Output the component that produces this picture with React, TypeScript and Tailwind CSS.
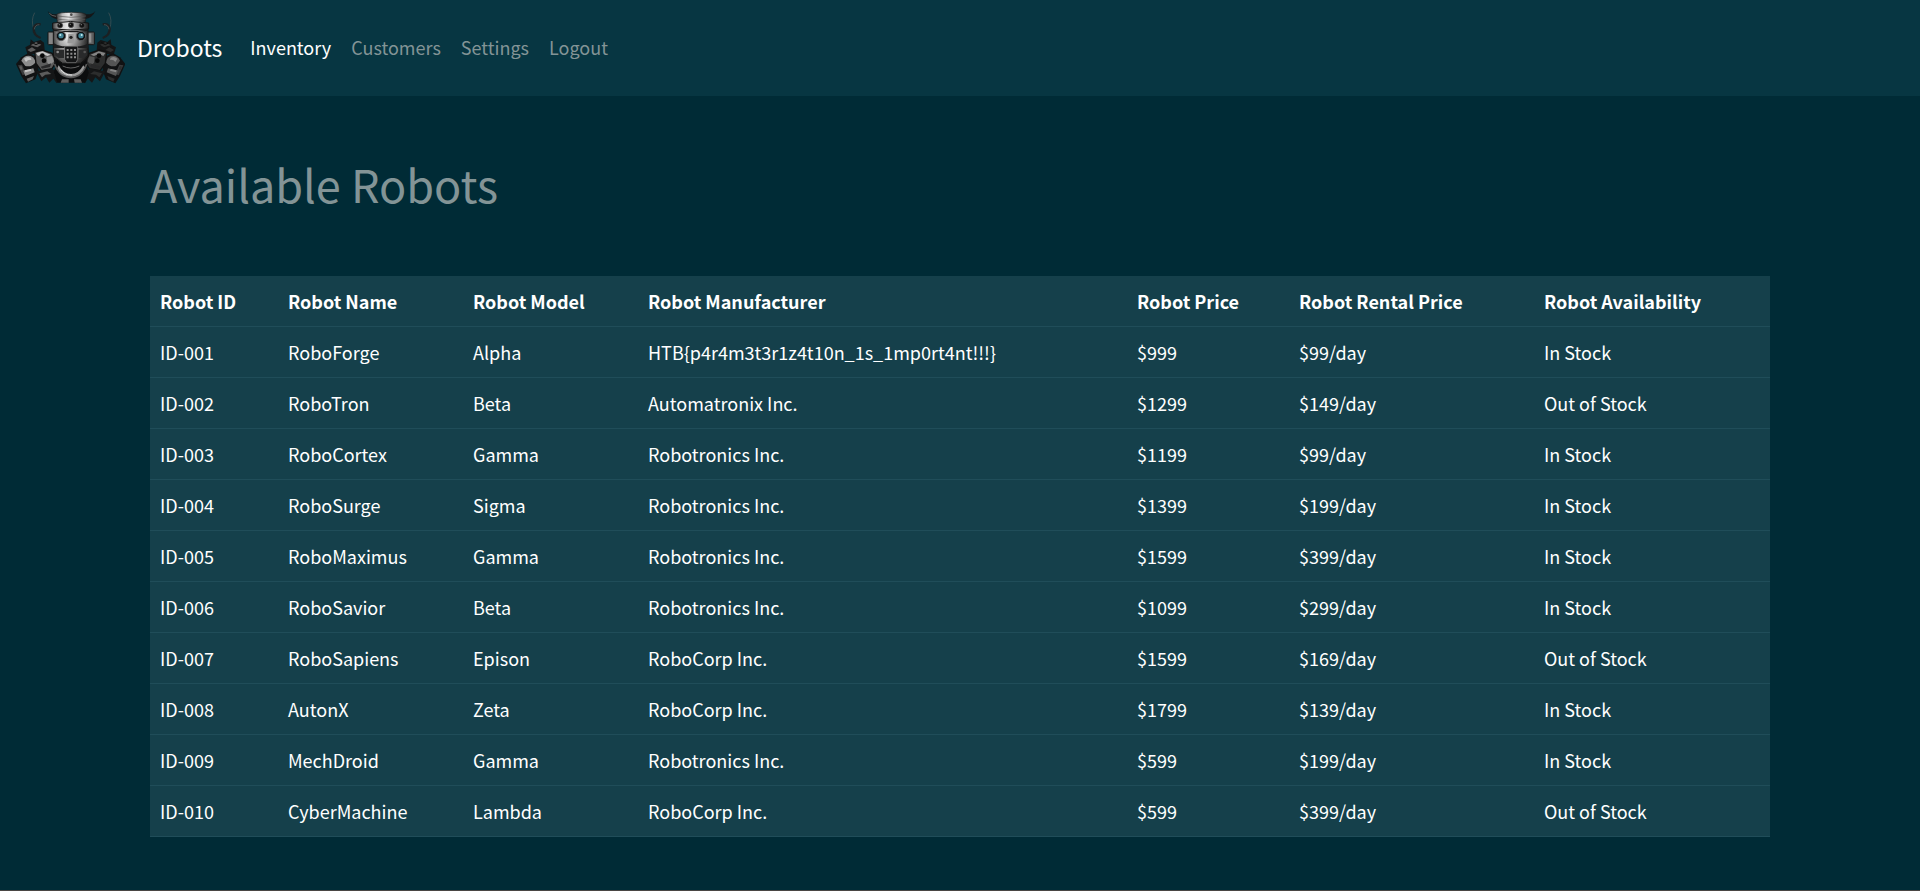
const columns = [
  { label: "Robot ID", width: "w-[128px]" },
  { label: "Robot Name", width: "w-[185px]" },
  { label: "Robot Model", width: "w-[175px]" },
  { label: "Robot Manufacturer", width: "" },
  { label: "Robot Price", width: "w-[162px]" },
  { label: "Robot Rental Price", width: "w-[245px]" },
  { label: "Robot Availability", width: "w-[236px]" },
];

const robots = [
  ["ID-001", "RoboForge", "Alpha", "HTB{p4r4m3t3r1z4t10n_1s_1mp0rt4nt!!!}", "$999", "$99/day", "In Stock"],
  ["ID-002", "RoboTron", "Beta", "Automatronix Inc.", "$1299", "$149/day", "Out of Stock"],
  ["ID-003", "RoboCortex", "Gamma", "Robotronics Inc.", "$1199", "$99/day", "In Stock"],
  ["ID-004", "RoboSurge", "Sigma", "Robotronics Inc.", "$1399", "$199/day", "In Stock"],
  ["ID-005", "RoboMaximus", "Gamma", "Robotronics Inc.", "$1599", "$399/day", "In Stock"],
  ["ID-006", "RoboSavior", "Beta", "Robotronics Inc.", "$1099", "$299/day", "In Stock"],
  ["ID-007", "RoboSapiens", "Epison", "RoboCorp Inc.", "$1599", "$169/day", "Out of Stock"],
  ["ID-008", "AutonX", "Zeta", "RoboCorp Inc.", "$1799", "$139/day", "In Stock"],
  ["ID-009", "MechDroid", "Gamma", "Robotronics Inc.", "$599", "$199/day", "In Stock"],
  ["ID-010", "CyberMachine", "Lambda", "RoboCorp Inc.", "$599", "$399/day", "Out of Stock"],
];

const links = ["Inventory", "Customers", "Settings", "Logout"];

function Antenna() {
  return (
    <g fill="none">
      <path d="M104 38Q92 60 101 86" stroke="#4a5658" strokeWidth="2" />
      <path d="M122 73Q104 70 101 86Q100 106 122 114" stroke="#1c2022" strokeWidth="7" />
      <path d="M118 74Q105 74 103 88" stroke="#5c6264" strokeWidth="2" />
    </g>
  );
}

function Arm({ plate, light, mid }: { plate: string; light: string; mid: string }) {
  return (
    <g>
      <path d="M92 118L102 126L122 120L132 128L134 150L112 158L84 168L76 142L90 134Z" fill="#141516" />
      <path d="M92 136L108 126L124 134L112 142ZM82 150L96 142L108 150L92 156Z" fill={mid} />
      <path d="M100 130L108 134L120 128" fill="none" stroke="#0c0c0c" strokeWidth="3" />
      <path d="M48 192L64 172L84 160L112 170L116 212L106 238L78 250L64 228Z" fill="#111213" />
      <path d="M64 182Q72 164 92 168Q106 174 106 188Q94 202 76 198Z" fill={plate} />
      <path d="M72 176Q80 168 92 173L94 180Q84 178 78 186Z" fill={light} />
      <path d="M54 196L66 194L78 222L68 226Z" fill="#3a3b3c" />
      <path d="M58 200L64 198L68 208L62 210Z" fill={mid} />
      <path d="M70 212L100 205L104 217L76 228Z" fill={plate} />
      <path d="M74 211L92 207L94 212L76 217Z" fill={light} />
      <path d="M80 236L102 228L98 238L84 245Z" fill={mid} />
      <path d="M104 156L126 150L156 160L170 184L156 206L124 212L108 190Z" fill={mid} stroke="#101010" strokeWidth="4" />
      <path d="M108 159L128 154L152 164L142 168L128 162L114 168Z" fill={light} />
      <path d="M140 172L156 168L162 184L150 196L142 188Z" fill={plate} />
      <path d="M122 200L154 190L150 201L126 206Z" fill="#29292a" />
      <circle cx="127" cy="167" r="7" fill="#080808" />
      <circle cx="132" cy="182" r="7" fill="#080808" />
      <path d="M108 214L154 206L196 222L210 246L196 242L188 250L178 240L170 250L160 236L148 248L138 232L124 244Z" fill="#151617" />
      <path d="M118 220L142 214L154 222L136 224L126 232ZM164 222L180 228L186 238L170 234Z" fill={mid} />
      <path d="M160 162L186 154L192 198L214 220V240L180 226L164 200Z" fill="#101112" />
    </g>
  );
}

function RobotLogo() {
  return (
    <svg className="h-20 w-[110px] shrink-0" viewBox="45 24 330 240" role="img" aria-label="Robot">
      <defs>
        <linearGradient id="steel" x1="0" x2="1" y1="0" y2="0">
          <stop offset="0" stopColor="#3c3c3c" />
          <stop offset="0.2" stopColor="#bdbdbd" />
          <stop offset="0.4" stopColor="#e6e6e6" />
          <stop offset="0.65" stopColor="#999" />
          <stop offset="1" stopColor="#1d1e1e" />
        </linearGradient>
        <linearGradient id="jaw" x1="0" x2="0" y1="0" y2="1">
          <stop offset="0.3" stopColor="#000" stopOpacity="0" />
          <stop offset="1" stopColor="#000" stopOpacity="0.65" />
        </linearGradient>
      </defs>
      <Antenna />
      <g transform="translate(430 0) scale(-1 1)">
        <Antenna />
      </g>
      <Arm plate="#8c8c8c" light="#c6c6c6" mid="#5c5c5c" />
      <g transform="translate(424 0) scale(-1 1)">
        <Arm plate="#555" light="#858585" mid="#2c2d2d" />
      </g>
      <path d="M170 180H258L266 218L256 248H172L162 218Z" fill="#0c0d0e" />
      <path d="M164 192Q178 232 213 232Q246 232 260 192" fill="none" stroke="#565656" strokeWidth="5" />
      <path d="M176 196Q190 222 213 222Q236 222 250 196L254 202Q242 230 213 230Q182 230 172 204Z" fill="#999" />
      <path d="M182 209Q194 226 216 225" fill="none" stroke="#e0e0e0" strokeWidth="3" />
      <path d="M188 198Q212 210 238 198" fill="none" stroke="#666" strokeWidth="3" />
      <path d="M186 238H206V248H182ZM222 238H242L246 248H224Z" fill="#5d5d5d" />
      <path d="M143 33Q151 44 170 43L172 58Q150 54 143 33ZM286 33Q278 44 258 43L254 58Q278 54 286 33Z" fill="#151617" />
      <path d="M148 40Q155 48 168 49" fill="none" stroke="#858585" strokeWidth="2" />
      <rect x="144" y="96" width="20" height="38" rx="2" fill="#858585" stroke="#151515" strokeWidth="3" />
      <rect x="262" y="96" width="21" height="38" rx="2" fill="#5d5f60" stroke="#151515" strokeWidth="3" />
      <rect x="266" y="100" width="8" height="28" fill="#909090" />
      <path d="M160 84H264V136L266 170L242 190H188L160 170V136Z" fill="url(#steel)" stroke="#161616" strokeWidth="3" />
      <path d="M160 84H264V136L266 170L242 190H188L160 170V136Z" fill="url(#jaw)" />
      <path d="M170 43Q176 37 214 37Q252 37 258 43L256 68H172Z" fill="url(#steel)" stroke="#1c1c1c" strokeWidth="2" />
      <path d="M170 48Q213 56 258 48M172 58Q213 64 256 58" fill="none" stroke="#555" strokeWidth="2" />
      <circle cx="214" cy="44" r="4" fill="#4b4b4b" />
      <path d="M158 69Q212 60 266 69V87Q212 93 158 87Z" fill="url(#steel)" stroke="#111" strokeWidth="3" />
      <g fill="#111" stroke="#555" strokeWidth="2">
        <circle cx="180" cy="76" r="8" />
        <circle cx="213" cy="75" r="8" />
        <circle cx="246" cy="76" r="8" />
      </g>
      <g fill="#7d7d7d">
        <circle cx="178" cy="74" r="2" />
        <circle cx="211" cy="73" r="2" />
        <circle cx="244" cy="74" r="2" />
      </g>
      <path d="M162 91Q212 99 264 91" fill="none" stroke="#1a1a1a" strokeWidth="4" />
      <g fill="#101112" stroke="#5a5c5d" strokeWidth="3">
        <circle cx="183" cy="108" r="14" />
        <circle cx="243" cy="108" r="14" />
      </g>
      <g fill="#3f8193">
        <circle cx="183" cy="107" r="8" />
        <circle cx="243" cy="107" r="8" />
      </g>
      <g fill="#c4edf2">
        <circle cx="181" cy="105" r="3" />
        <circle cx="245" cy="105" r="3" />
      </g>
      <path d="M205 102H221L224 130H202Z" fill="#999" />
      <circle cx="213" cy="112" r="5" fill="#202020" />
      <path d="M162 130Q178 141 194 138H232Q250 141 264 130V144H162Z" fill="#1c1d1e" />
      <path d="M165 149H192V174H176L165 166ZM236 149H262V166L252 174H236Z" fill="#292a2b" />
      <circle cx="173" cy="156" r="4" fill="#8c8c8c" />
      <circle cx="254" cy="156" r="4" fill="#555" />
      <path d="M194 139H233V178L228 188H200L194 178Z" fill="#151617" stroke="#838383" strokeWidth="2" />
      <path
        d="M200 147H206V153H200ZM211 147H217V153H211ZM222 147H228V153H222ZM200 158H206V164H200ZM211 158H217V164H211ZM222 158H228V164H222ZM200 169H206V175H200ZM211 169H217V175H211ZM222 169H228V175H222Z"
        fill="#8e8e8e"
      />
    </svg>
  );
}

export default function App() {
  return (
    <div className="min-h-screen border-b border-[#4a4644] bg-[#002b36] font-['Noto_Sans_CJK_SC',sans-serif] text-[18px] leading-[30px] text-[#839496]">
      <nav className="flex items-center bg-[#073642] px-[15px] py-2" aria-label="Main">
        <a href="#home" className="flex items-center gap-3 text-[23px] text-white">
          <RobotLogo />
          <span className="pb-[2px]">Drobots</span>
        </a>
        <ul className="ml-[18px] flex pb-[2px]">
          {links.map((link) => (
            <li key={link}>
              <a
                href={"#" + link.toLowerCase()}
                aria-current={link === "Inventory" ? "page" : undefined}
                className="block px-[10px] py-2 aria-[current=page]:text-white"
              >
                {link}
              </a>
            </li>
          ))}
        </ul>
      </nav>
      <main className="mx-auto max-w-[1650px] px-[15px] pt-[58px]">
        <h1 className="mb-[62px] text-[45px] leading-[60px]">Available Robots</h1>
        <table className="w-full table-fixed border-collapse bg-[#15404b] text-left text-white">
          <thead>
            <tr className="border-b border-[#204d59]">
              {columns.map((column) => (
                <th key={column.label} scope="col" className={"px-[10px] py-[10px] font-bold " + column.width}>
                  {column.label}
                </th>
              ))}
            </tr>
          </thead>
          <tbody>
            {robots.map((robot) => (
              <tr key={robot[0]} className="border-b border-[#204d59]">
                {robot.map((value, index) => (
                  <td key={index} className="px-[10px] py-[10px]">
                    {value}
                  </td>
                ))}
              </tr>
            ))}
          </tbody>
        </table>
      </main>
    </div>
  );
}
